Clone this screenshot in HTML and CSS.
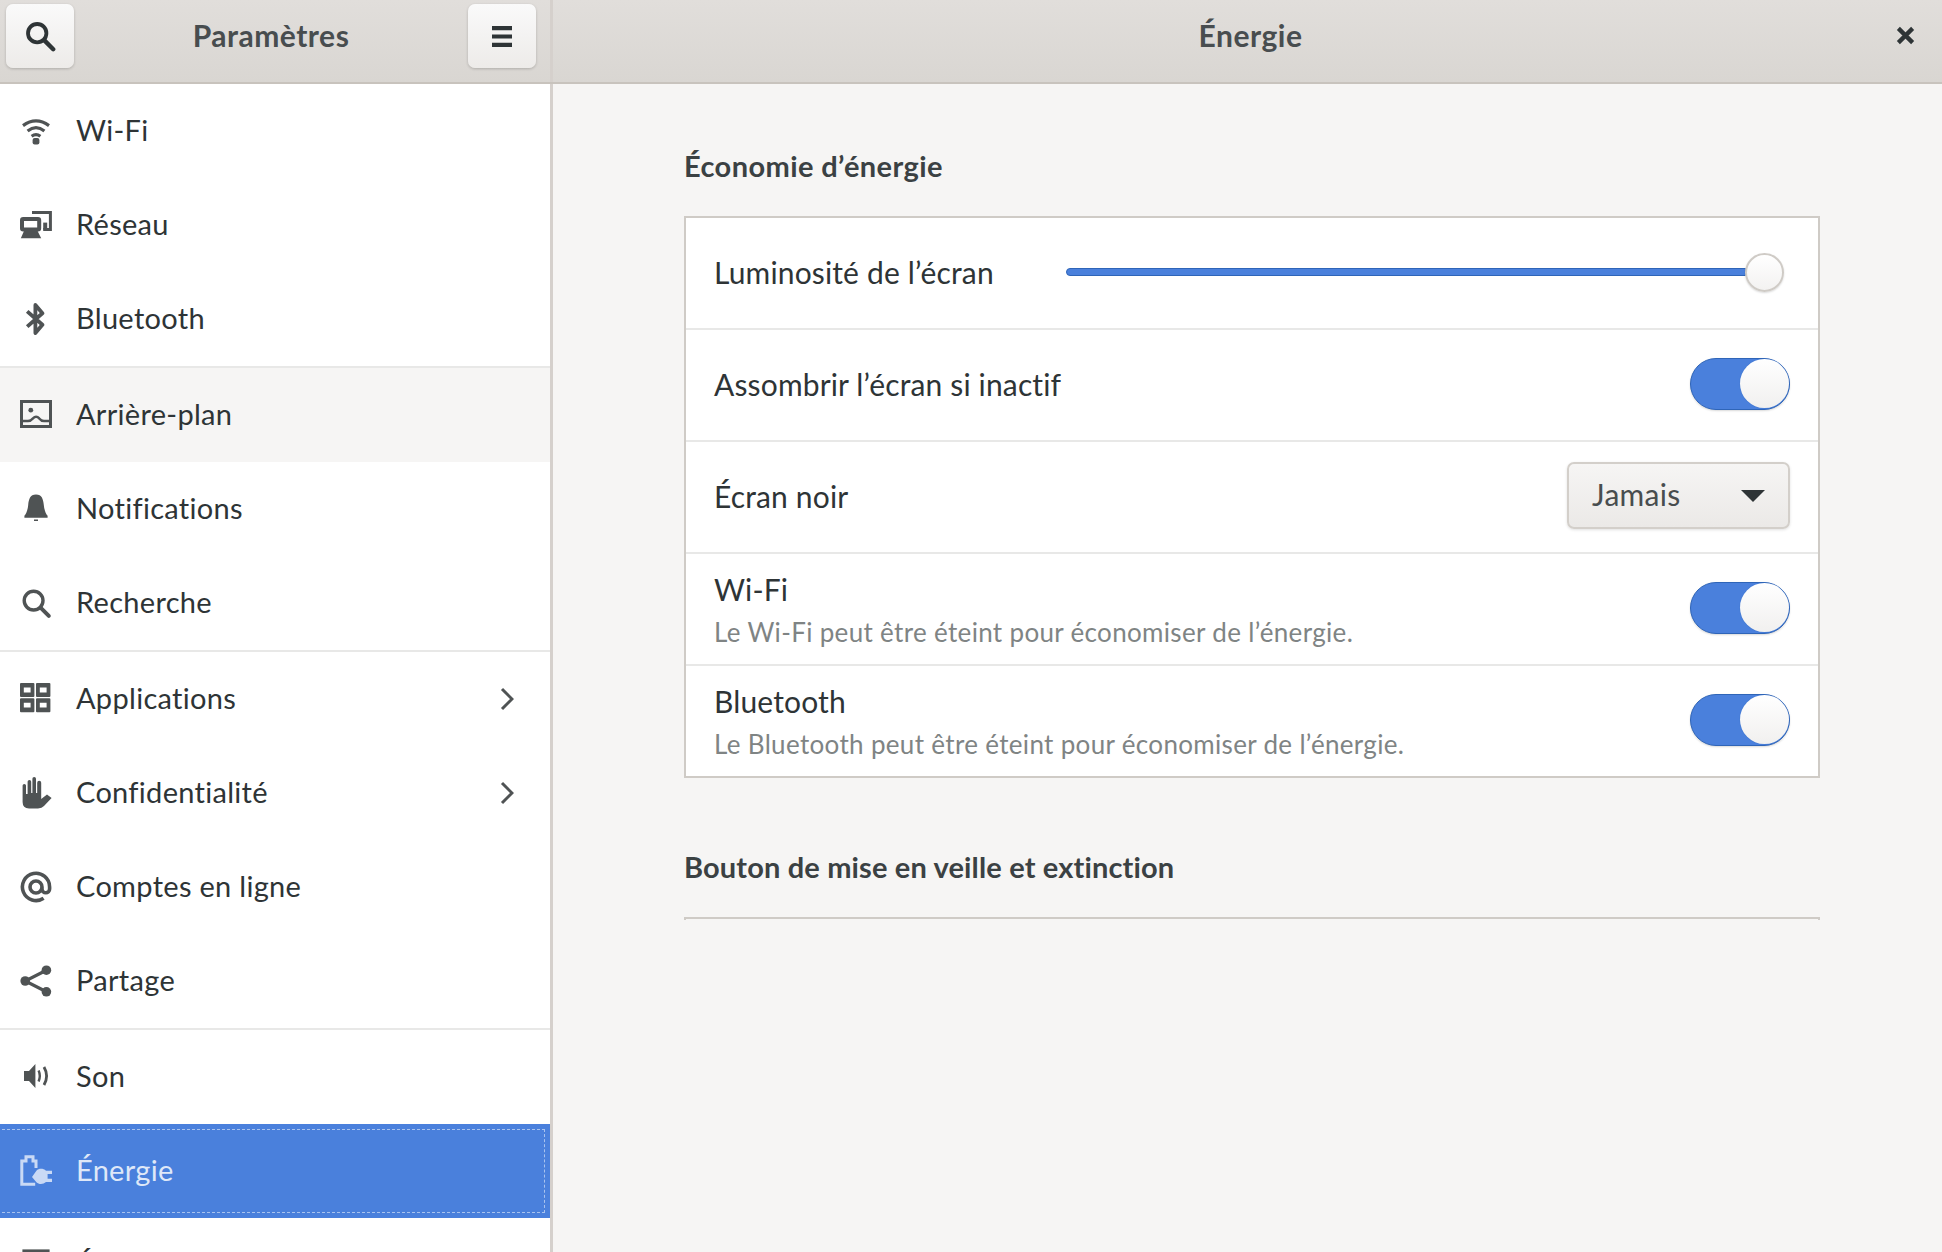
FILE: index.html
```html
<!DOCTYPE html>
<html lang="fr">
<head>
    <meta charset="UTF-8">
    <title>Paramètres</title>
    <link rel="stylesheet" href="styles.css">
</head>
<body>
    <header class="topbar">
        <div class="topbar-left">
            <button class="tool-btn">
                <svg class="icon" viewBox="0 0 16 16"><circle cx="6.6" cy="6.6" r="4.6" fill="none" stroke="currentColor" stroke-width="1.9"/><path d="M10.2 10.2L14.6 14.6" fill="none" stroke="currentColor" stroke-width="2.2" stroke-linecap="round"/></svg>
            </button>
            <div class="topbar-title">Paramètres</div>
            <button class="tool-btn">
                <svg class="icon" viewBox="0 0 16 16"><path d="M3 3h10v2.1H3zM3 7.2h10v2.1H3zM3 11.4h10v2.1H3z" fill="currentColor"/></svg>
            </button>
        </div>
        <div class="topbar-right">
            <div class="topbar-title">Énergie</div>
            <svg class="close-icon" viewBox="0 0 16 16"><path d="M2 2L14 14M14 2L2 14" fill="none" stroke="currentColor" stroke-width="3.6"/></svg>
        </div>
    </header>

    <div class="content">
        <nav class="sidebar">
            <a class="nav-row">
                <svg class="icon" viewBox="0 0 16 16"><g fill="none" stroke="currentColor" stroke-width="1.6"><path d="M1.5 5.3Q8 .6 14.5 5.3"/><path d="M3.8 8Q8 4.7 12.2 8"/><path d="M5.8 10.6Q8 9.1 10.2 10.6"/></g><rect x="6.3" y="11.5" width="3.4" height="3.2" rx="1" fill="currentColor"/></svg>
                <span>Wi-Fi</span>
            </a>
            <a class="nav-row">
                <svg class="icon" viewBox="0 0 16 16"><path d="M6 1.8H15.2V10.3H11.6" fill="none" stroke="currentColor" stroke-width="1.5"/><path d="M11.6 6.8H13.6V10.3H11.6z" fill="currentColor"/><rect x="1" y="5" width="8.6" height="5.2" rx=".6" fill="none" stroke="currentColor" stroke-width="2"/><path d="M2 11H8.8L10.6 14.6H.4z" fill="currentColor"/></svg>
                <span>Réseau</span>
            </a>
            <a class="nav-row">
                <svg class="icon" viewBox="0 0 16 16"><path d="M3.6 4.2L11.2 10.9L7.7 15V1L11.2 5.1L3.6 11.8" fill="none" stroke="currentColor" stroke-width="1.9" stroke-linejoin="round"/></svg>
                <span>Bluetooth</span>
            </a>
            <div class="nav-sep"></div>
            <a class="nav-row hovered">
                <svg class="icon" viewBox="0 0 16 16"><rect x=".75" y="1.25" width="14.5" height="12.5" fill="none" stroke="currentColor" stroke-width="1.5"/><circle cx="5.4" cy="5.6" r="1.2" fill="currentColor"/><path d="M1 11H4Q5.4 11 6.5 9.7C7.5 8.6 8.6 8.6 9.6 9.7Q10.6 11 12 11H15" fill="none" stroke="currentColor" stroke-width="1.2"/></svg>
                <span>Arrière-plan</span>
            </a>
            <a class="nav-row">
                <svg class="icon" viewBox="0 0 16 16"><path d="M8 .8C5 .8 4.4 3.2 4.1 6C3.8 8.8 3.1 10.4 2.2 11.4V12.4H13.8V11.4C12.9 10.4 12.2 8.8 11.9 6C11.6 3.2 11 .8 8 .8zM7 13.2H9V14H7z" fill="currentColor"/></svg>
                <span>Notifications</span>
            </a>
            <a class="nav-row">
                <svg class="icon" viewBox="0 0 16 16"><circle cx="6.8" cy="6.8" r="4.7" fill="none" stroke="currentColor" stroke-width="1.7"/><path d="M10.4 10.4L14.4 14.4" fill="none" stroke="currentColor" stroke-width="2" stroke-linecap="round"/></svg>
                <span>Recherche</span>
            </a>
            <div class="nav-sep"></div>
            <a class="nav-row">
                <svg class="icon" viewBox="0 0 16 16"><path fill-rule="evenodd" fill="currentColor" d="M.5 0H6.7a.5.5 0 0 1 .5.5V6.5a.5.5 0 0 1-.5.5H.5a.5.5 0 0 1-.5-.5V.5a.5.5 0 0 1 .5-.5zM1.9 2.3V4.7H5.3V2.3zM8.5 0H14.7a.5.5 0 0 1 .5.5V6.5a.5.5 0 0 1-.5.5H8.5a.5.5 0 0 1-.5-.5V.5a.5.5 0 0 1 .5-.5zM9.9 2.3V4.7H13.3V2.3zM.5 7.6H6.7a.5.5 0 0 1 .5.5V14.1a.5.5 0 0 1-.5.5H.5a.5.5 0 0 1-.5-.5V8.1a.5.5 0 0 1 .5-.5zM1.9 9.9V12.3H5.3V9.9zM8.5 7.6H14.7a.5.5 0 0 1 .5.5V14.1a.5.5 0 0 1-.5.5H8.5a.5.5 0 0 1-.5-.5V8.1a.5.5 0 0 1 .5-.5zM9.9 9.9V12.3H13.3V9.9z"/></svg>
                <span>Applications</span>
                <svg class="chevron" viewBox="0 0 14 24"><path d="M2 2L12 12L2 22" fill="none" stroke="currentColor" stroke-width="3"/></svg>
            </a>
            <a class="nav-row">
                <svg class="icon" viewBox="0 0 16 16"><path d="M1.3 4.3a.85.85 0 0 1 1.7 0V8.5H3.8V2.4a.9.9 0 0 1 1.8 0V8H6.2V.9a.9.9 0 0 1 1.8 0V8H8.6V2.9a1 1 0 0 1 2 0V11L13.5 8.8L15.8 10.5L12 14.5Q11 15.7 9 15.7H4.5Q1.3 15.7 1.3 12.5z" fill="currentColor"/></svg>
                <span>Confidentialité</span>
                <svg class="chevron" viewBox="0 0 14 24"><path d="M2 2L12 12L2 22" fill="none" stroke="currentColor" stroke-width="3"/></svg>
            </a>
            <a class="nav-row">
                <svg class="icon" viewBox="0 0 16 16"><path d="M11 8a3 3 0 1 1-6 0a3 3 0 1 1 6 0v1a1.9 1.9 0 0 0 3.8 0V8a6.8 6.8 0 1 0-3 5.6" fill="none" stroke="currentColor" stroke-width="1.8"/></svg>
                <span>Comptes en ligne</span>
            </a>
            <a class="nav-row">
                <svg class="icon" viewBox="0 0 16 16"><circle cx="13.2" cy="2.6" r="2.4" fill="currentColor"/><circle cx="2.6" cy="8" r="2.4" fill="currentColor"/><circle cx="13.2" cy="13.4" r="2.4" fill="currentColor"/><path d="M13.2 2.6L2.6 8L13.2 13.4" fill="none" stroke="currentColor" stroke-width="1.6"/></svg>
                <span>Partage</span>
            </a>
            <div class="nav-sep"></div>
            <a class="nav-row">
                <svg class="icon" viewBox="0 0 16 16"><path d="M2 5H4.5L7.7 1.5V13.5L4.5 10H2z" fill="currentColor"/><path d="M9.3 4.8Q10.5 7.5 9.3 10.2" fill="none" stroke="currentColor" stroke-width="1.2"/><path d="M12 3Q14.6 7.5 12 12" fill="none" stroke="currentColor" stroke-width="1.4"/></svg>
                <span>Son</span>
            </a>
            <a class="nav-row selected">
                <svg class="icon" viewBox="0 0 16 16"><path d="M7.6 14.6H.9V3H3V.9H6.5V3H8V6.5" fill="none" stroke="currentColor" stroke-width="1.5"/><path d="M6 11L8.2 7.9C9.4 6.6 11.6 6.6 13 7.9H16V9.5H13.8V11.9H16V13.5H13C11.6 14.8 9.4 14.8 8.2 13.6z" fill="currentColor"/></svg>
                <span>Énergie</span>
            </a>
            <a class="nav-row">
                <svg class="icon" viewBox="0 0 16 16"><rect x="2" y="1" width="12" height="9.5" fill="none" stroke="currentColor" stroke-width="1.6"/><path d="M5 13h6v1.5H5z" fill="currentColor"/></svg>
                <span>Écrans</span>
            </a>
        </nav>

        <main class="panel">
            <h2 class="section-title">Économie d’énergie</h2>
            <section class="card">
                <div class="row">
                    <div class="row-label">Luminosité de l’écran</div>
                    <div class="slider">
                        <div class="slider-track"></div>
                        <div class="slider-thumb"></div>
                    </div>
                </div>
                <div class="row">
                    <div class="row-label">Assombrir l’écran si inactif</div>
                    <div class="switch"><div class="switch-knob"></div></div>
                </div>
                <div class="row">
                    <div class="row-label">Écran noir</div>
                    <div class="dropdown">
                        <span>Jamais</span>
                        <div class="dropdown-arrow"></div>
                    </div>
                </div>
                <div class="row">
                    <div>
                        <div class="row-label">Wi-Fi</div>
                        <div class="row-sub">Le Wi-Fi peut être éteint pour économiser de l’énergie.</div>
                    </div>
                    <div class="switch"><div class="switch-knob"></div></div>
                </div>
                <div class="row">
                    <div>
                        <div class="row-label">Bluetooth</div>
                        <div class="row-sub">Le Bluetooth peut être éteint pour économiser de l’énergie.</div>
                    </div>
                    <div class="switch"><div class="switch-knob"></div></div>
                </div>
            </section>

            <h2 class="section-title second">Bouton de mise en veille et extinction</h2>
            <div class="card-cut"></div>
        </main>
    </div>
</body>
</html>
```

FILE: styles.css
```css
* {
    box-sizing: border-box;
}
html, body {
    height: 100%;
}
body {
    margin: 0;
    overflow: hidden;
    font-family: Lato, "Noto Sans", sans-serif;
    font-size: 29px;
    letter-spacing: 0.3px;
    color: #2e3436;
    background-color: #f6f5f4;
}

/* top bar */
.topbar {
    display: flex;
    height: 84px;
    background: linear-gradient(#e1dedb, #d9d6d2);
    border-bottom: 2px solid #c8c3bd;
}
.topbar-left {
    display: flex;
    align-items: center;
    justify-content: space-between;
    width: 553px;
    padding: 0 14px 10px 6px;
    border-right: 3px solid #d5d0cc;
}
.topbar-right {
    position: relative;
    flex: 1;
    display: flex;
    align-items: center;
    justify-content: center;
    padding: 0 0 10px 6px;
}
.topbar-title {
    margin-bottom: 3px;
    font-size: 30px;
    letter-spacing: 0.5px;
    font-weight: 700;
    color: #484d4f;
}
.tool-btn {
    display: flex;
    align-items: center;
    justify-content: center;
    width: 68px;
    height: 64px;
    padding: 0;
    border: none;
    border-radius: 7px;
    color: #2e3436;
    background: linear-gradient(#fafafa, #edebe9);
    box-shadow: 0 1px 3px rgba(0, 0, 0, 0.2);
}
.icon {
    flex: none;
    width: 32px;
    height: 32px;
}
.close-icon {
    position: absolute;
    top: 26px;
    right: 27px;
    width: 19px;
    height: 19px;
}

/* sidebar */
.content {
    display: flex;
    height: 1168px;
}
.sidebar {
    flex: none;
    width: 553px;
    background: white;
    border-right: 3px solid #d5d0cc;
}
.nav-row {
    position: relative;
    display: flex;
    align-items: center;
    height: 94px;
    padding: 0 36px 0 20px;
}
.nav-row span {
    flex: 1;
    margin-left: 24px;
    padding-bottom: 3px;
}
.nav-row .icon {
    color: #4f5354;
}
.chevron {
    width: 14px;
    height: 24px;
    color: #4f5354;
}
.nav-sep {
    height: 2px;
    background-color: #e8e8e7;
}
.hovered {
    background-color: #f6f5f4;
}
.selected {
    color: #dfe8f8;
    background-color: #4a80dc;
}
.selected .icon {
    color: #c9d9f5;
}
.selected::after {
    content: "";
    position: absolute;
    top: 5px;
    right: 5px;
    bottom: 5px;
    left: -3px;
    border: 1px dashed #a9c3ee;
}

/* right panel */
.panel {
    flex: 1;
    padding: 62px 0 0 131px;
}
.section-title {
    width: 1136px;
    height: 40px;
    margin: 0 0 30px 0;
    font-size: 29px;
    letter-spacing: 0.4px;
    line-height: 40px;
    font-weight: 700;
    color: #3b4143;
}
.section-title.second {
    margin: 69px 0 30px 0;
    letter-spacing: 0.15px;
}
.card {
    width: 1136px;
    background: white;
    border: 2px solid #cfcbc6;
}
.card-cut {
    width: 1136px;
    height: 3px;
    border: 2px solid #cfcbc6;
    border-bottom: none;
}
.row {
    display: flex;
    align-items: center;
    justify-content: space-between;
    height: 112px;
    padding: 0 28px 0 28px;
    border-bottom: 2px solid #e8e8e7;
}
.row:last-child {
    height: 110px;
    border-bottom: none;
}
.row-label {
    margin-bottom: 2px;
    font-size: 30px;
    letter-spacing: 0.15px;
    line-height: 40px;
    color: #2e3436;
}
.row-sub {
    margin-top: 5px;
    font-size: 26px;
    letter-spacing: 0.33px;
    line-height: 36px;
    color: #7f8484;
}

/* controls */
.slider {
    display: flex;
    align-items: center;
    width: 718px;
    margin: 0 6px 2px 0;
}
.slider-track {
    flex: 1;
    height: 8px;
    background-color: #4a80dc;
    border: 1px solid #2f65b8;
    border-radius: 4px 0 0 4px;
}
.slider-thumb {
    flex: none;
    width: 39px;
    height: 39px;
    margin-left: -1px;
    border: 2px solid #cfcbc6;
    border-radius: 50%;
    background: linear-gradient(#ffffff, #f3f2f1);
    box-shadow: 0 1px 2px rgba(0, 0, 0, 0.15);
}
.switch {
    display: flex;
    justify-content: flex-end;
    flex: none;
    width: 100px;
    height: 52px;
    margin-bottom: 3px;
    border: 1.5px solid #2f65b8;
    border-radius: 26px;
    background-color: #4a80dc;
    box-shadow: 0 1px 2px rgba(0, 0, 0, 0.15);
}
.switch-knob {
    width: 49px;
    height: 49px;
    border-radius: 50%;
    background: linear-gradient(#ffffff, #f1f0ef);
    box-shadow: 0 0 1px #2f65b8;
}
.dropdown {
    display: flex;
    align-items: center;
    justify-content: space-between;
    width: 223px;
    height: 67px;
    margin-bottom: 3px;
    padding: 0 23px 3px 23px;
    font-size: 30px;
    color: #484d4f;
    border: 2px solid #d3cfca;
    border-radius: 7px;
    background: linear-gradient(#f6f5f4, #ebe9e7);
    box-shadow: 0 1px 3px rgba(0, 0, 0, 0.12);
}
.dropdown-arrow {
    width: 0;
    height: 0;
    margin-top: 3px;
    border-left: 12px solid transparent;
    border-right: 12px solid transparent;
    border-top: 12px solid #2e3436;
}
```
